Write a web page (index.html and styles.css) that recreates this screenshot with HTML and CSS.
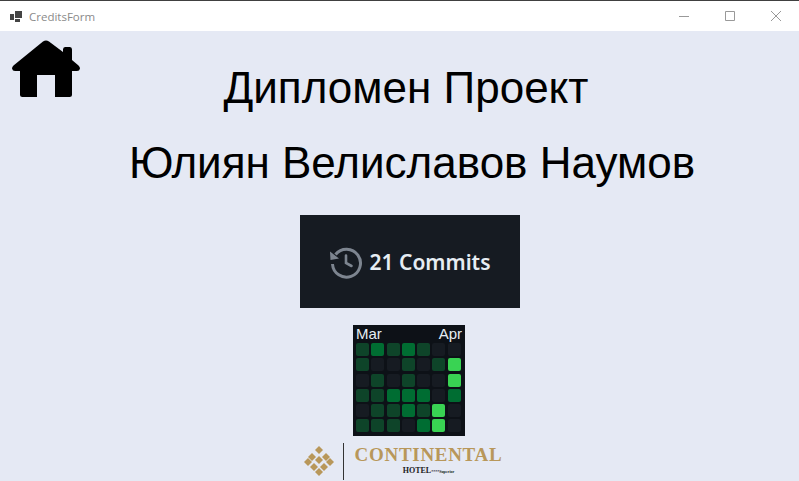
FILE: index.html
```html
<!DOCTYPE html>
<html lang="en">
<head>
    <meta charset="UTF-8">
    <title>CreditsForm</title>
    <link rel="stylesheet" href="styles.css">
</head>
<body>
    <!-- Window title bar -->
    <div class="titlebar">
        <svg class="app-icon" width="13" height="11" viewBox="0 0 13 11">
            <path fill="#444" d="M0 3h4v6H0zM5 0h7v7H5zM5 8h5v3H5z"/>
        </svg>
        <span class="app-title">CreditsForm</span>
        <div class="window-btns">
            <svg class="win-btn" width="46" height="30" viewBox="0 0 46 30"><path stroke="#999" fill="none" d="M18 15.5h10"/></svg>
            <svg class="win-btn" width="46" height="30" viewBox="0 0 46 30"><path stroke="#999" fill="none" d="M18.5 10.5h9v9h-9z"/></svg>
            <svg class="win-btn" width="46" height="30" viewBox="0 0 46 30"><path stroke="#999" fill="none" d="M18 10l10 10M28 10L18 20"/></svg>
        </div>
    </div>

    <div class="content">
        <svg class="home-icon" width="68" height="57" viewBox="0 0 68 57">
            <path d="M31 1.500Q34 -0.500 37 1.500L51 12V9.500Q51 7 53 7H58Q60 7 60 9.500V20L66.500 25.500Q68 27 68 28.500Q67.500 31 65 31H60V54.500Q60 57 57.500 57H43V35H25V57H10.500Q8 57 8 54.500V31H3Q0.500 31 0 28.500Q0 27 1.500 25.500Z"/>
        </svg>

        <div class="credits">
            <h1 class="title title-project">Дипломен Проект</h1>
            <h1 class="title title-name">Юлиян Велиславов Наумов</h1>

            <div class="commits">
                <svg class="history-icon" width="34" height="34" viewBox="0 0 34 34">
                    <path fill="none" stroke="#7d8590" stroke-width="3" d="M6.500 9.500A14 14 0 1 1 3.500 19"/>
                    <path fill="#7d8590" d="M1 6.500L1.500 15L10 13.500Z"/>
                    <path fill="none" stroke="#7d8590" stroke-width="2.600" stroke-linecap="round" d="M17 10.500V18L22.500 21"/>
                </svg>
                <span class="commits-text">21 Commits</span>
            </div>

            <div class="graph">
                <div class="graph-months"><span>Mar</span><span>Apr</span></div>
                <div class="graph-cells">
                    <i class="l1"></i><i class="l2"></i><i class="l1"></i><i class="l2"></i><i class="l1"></i><i></i><i></i>
                    <i class="l1"></i><i></i><i></i><i class="l1"></i><i></i><i class="l1"></i><i class="l3"></i>
                    <i></i><i class="l1"></i><i></i><i class="l1"></i><i></i><i></i><i class="l3"></i>
                    <i class="l1"></i><i class="l1"></i><i class="l2"></i><i class="l2"></i><i class="l2"></i><i></i><i class="l2"></i>
                    <i></i><i class="l1"></i><i class="l1"></i><i class="l2"></i><i class="l1"></i><i class="l3"></i><i></i>
                    <i class="l1"></i><i class="l1"></i><i class="l1"></i><i></i><i class="l2"></i><i class="l3"></i><i></i>
                </div>
            </div>

            <div class="logo">
                <svg class="logo-mark" width="30" height="30" viewBox="0 0 30 30">
                    <path fill="#b8975a" d="M15 0L19 4L15 8L11 4ZM8 7L12 11L8 15L4 11ZM22 7L26 11L22 15L18 11ZM15 10L19 14L15 18L11 14ZM4 12L8 16L4 20L0 16ZM26 12L30 16L26 20L22 16ZM10 17L14 21L10 25L6 21ZM20 17L24 21L20 25L16 21ZM15 22L19 26L15 30L11 26Z"/>
                </svg>
                <div class="logo-line"></div>
                <div class="logo-text">
                    <span class="logo-name">CONTINENTAL</span>
                    <span class="logo-sub">HOTEL<small>****Superior</small></span>
                </div>
            </div>
        </div>
    </div>
</body>
</html>
```

FILE: styles.css
```css
/* CSS Styles */
html, body {
    height: 100%;
}

body {
    margin: 0;
    overflow: hidden;
    background-color: #e5e9f4;
    color: #000;
    font-family: 'Liberation Sans', Arial, sans-serif;
}

.titlebar {
    display: flex;
    align-items: center;
    height: 30px;
    background-color: #fff;
    border-top: 1px solid #404040;
}

.app-icon {
    margin-left: 10px;
}

.app-title {
    margin-left: 6px;
    font-family: 'Open Sans', sans-serif;
    font-size: 11.500px;
    color: #8a8a8a;
}

.window-btns {
    display: flex;
    margin-left: auto;
    margin-right: 0;
}

.win-btn {
    display: block;
}

/* home icon sits over the same grid cell as the centred column */
.content {
    display: grid;
}

.home-icon {
    grid-area: 1 / 1;
    margin: 9px 0 0 12px;
}

.credits {
    grid-area: 1 / 1;
    display: flex;
    flex-direction: column;
    align-items: center;
}

.title {
    margin: 0;
    font-size: 44px;
    font-weight: normal;
    line-height: 50px;
    white-space: nowrap;
}

.title-project {
    margin-top: 32px;
    margin-left: 13px;
}

.title-name {
    margin-top: 25px;
    margin-left: 25px;
}

.commits {
    display: flex;
    align-items: center;
    justify-content: center;
    gap: 7px;
    box-sizing: border-box;
    width: 220px;
    height: 93px;
    margin-top: 27px;
    margin-left: 20px;
    background-color: #161b22;
}

.commits-text {
    font-family: 'Noto Sans', sans-serif;
    font-size: 21px;
    font-weight: 600;
    color: #e6edf3;
}

.graph {
    box-sizing: border-box;
    width: 112px;
    height: 111px;
    margin-top: 17px;
    margin-left: 19px;
    padding: 0 3px;
    background-color: #0d1117;
}

.graph-months {
    display: flex;
    justify-content: space-between;
    height: 18px;
    font-size: 15px;
    line-height: 17px;
    color: #e6edf3;
}

.graph-cells {
    display: grid;
    grid-template-columns: repeat(7, 13px);
    grid-auto-rows: 13px;
    gap: 2.300px;
}

.graph-cells i {
    border-radius: 2px;
    background-color: #161b22;
}

.graph-cells .l1 {
    background-color: #0e4429;
}

.graph-cells .l2 {
    background-color: #006d32;
}

.graph-cells .l3 {
    background-color: #39d353;
}

.logo {
    display: flex;
    align-items: center;
    height: 38px;
    margin-top: 6px;
    margin-left: 7px;
}

.logo-mark {
    display: block;
}

.logo-line {
    width: 1px;
    height: 37px;
    margin: 0 11px 0 9px;
    background-color: #333;
}

.logo-text {
    display: flex;
    flex-direction: column;
    align-items: center;
    font-family: 'Liberation Serif', serif;
}

.logo-name {
    font-size: 19px;
    font-weight: bold;
    line-height: 20px;
    letter-spacing: 0.700px;
    color: #b8975a;
}

.logo-sub {
    font-size: 8px;
    font-weight: bold;
    line-height: 12px;
    color: #222;
}

.logo-sub small {
    font-size: 4px;
}
```
